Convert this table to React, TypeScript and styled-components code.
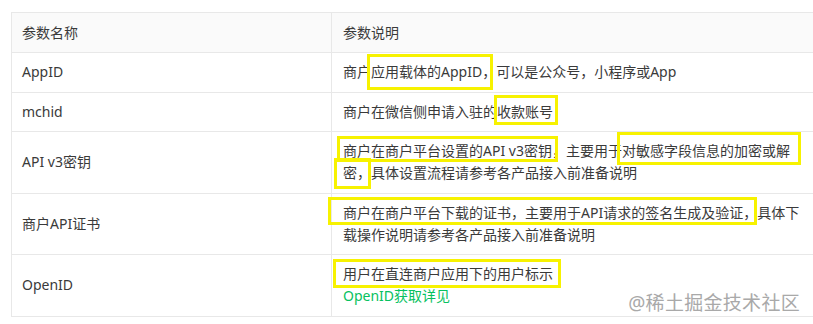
import styled, { createGlobalStyle } from 'styled-components';

const GlobalStyle = createGlobalStyle`
  html, body {
    margin: 0;
    padding: 0;
    background: #fff;
    overflow: hidden;
  }
  body {
    font-family: "Noto Sans", "Noto Sans CJK SC", sans-serif;
  }
`;

type Box = { $t: number; $r: number; $b: number; $l: number };

const names = ['AppID', 'mchid', 'API v3密钥', '商户API证书', 'OpenID'];

export default function App(){
	return(
		<Page>
			<GlobalStyle />
			<Table>
				<colgroup>
					<col style={{ width: 320 }} />
					<col />
				</colgroup>
				<thead>
					<tr>
						<HeadCell>参数名称</HeadCell>
						<HeadCell>参数说明</HeadCell>
					</tr>
				</thead>
				<tbody>
					<tr>
						<NameCell>{names[0]}</NameCell>
						<DescCell>
              商户<Mark $t={7} $r={-3} $b={7} $l={4}>应用载体的AppID，</Mark>可以是公众号，小程序或App
						</DescCell>
					</tr>
					<tr>
						<NameCell>{names[1]}</NameCell>
						<DescCell>
              商户在微信侧申请入驻的<Mark $t={6} $r={5} $b={2} $l={3}>收款账号</Mark>
						</DescCell>
					</tr>
					<tr>
						<NameCell>{names[2]}</NameCell>
						<DescCell>
							<Mark $t={4} $r={-8} $b={0} $l={6}>商户在商户平台设置的API v3密钥，</Mark>主要用于
							<Mark $t={8} $r={11} $b={3} $l={5}>对敏感字段信息的加密或解</Mark>
							<Mark $t={4} $r={0} $b={5} $l={9}>密，</Mark>具体设置流程请参考各产品接入前准备说明
						</DescCell>
					</tr>
					<tr>
						<NameCell>{names[3]}</NameCell>
						<DescCell>
							<Mark $t={5} $r={0} $b={1} $l={15}>商户在商户平台下载的证书，主要用于API请求的签名生成及验证，</Mark>具体下载操作说明请参考各产品接入前准备说明
						</DescCell>
					</tr>
					<tr>
						<NameCell>{names[4]}</NameCell>
						<DescCell>
							<Mark $t={4} $r={8} $b={3} $l={10}>用户在直连商户应用下的用户标示</Mark>
							<br />
							<Link href='#'>OpenID获取详见</Link>
						</DescCell>
					</tr>
				</tbody>
			</Table>
			<Watermark>@稀土掘金技术社区</Watermark>
		</Page>
	);
}

const Page = styled.div`
  position: relative;
  width: 813px;
  height: 324px;
  padding: 12px 0 0 11px;
  box-sizing: border-box;
  overflow: hidden;
`;

const Table = styled.table`
  width: 812px;
  border-collapse: collapse;
  table-layout: fixed;
  font-size: 14px;
  line-height: 22px;
  color: #3a3a3a;
`;

const BaseCell = styled.td`
  border: 1px solid #e8e8e8;
  padding: 8px 11px 8.5px 11px;
  text-align: left;
  vertical-align: middle;
  font-weight: normal;
`;

const HeadCell = styled(BaseCell).attrs({ as: 'th' })`
  background-color: #fafafa;
  padding-top: 8.5px;
  padding-left: 10px;

  & + & {
    padding-left: 11px;
    border-right: none;
  }
`;

const NameCell = styled(BaseCell)`
  padding-left: 10px;
`;

const DescCell = styled(BaseCell)`
  padding-right: 17px;
  border-right: none;
`;

const Mark = styled.span<Box>`
  position: relative;
  display: inline-block;

  &::after {
    content: '';
    position: absolute;
    top: ${p => -p.$t}px;
    right: ${p => -p.$r}px;
    bottom: ${p => -p.$b}px;
    left: ${p => -p.$l}px;
    border: 3px solid #f7f200;
    pointer-events: none;
  }
`;

const Link = styled.a`
  color: #07c160;
  text-decoration: none;
`;

const Watermark = styled.div`
  position: absolute;
  right: 13px;
  top: 291px;
  font-size: 19px;
  line-height: 24px;
  color: #a9a9a9;
  letter-spacing: 0.3px;
`;
